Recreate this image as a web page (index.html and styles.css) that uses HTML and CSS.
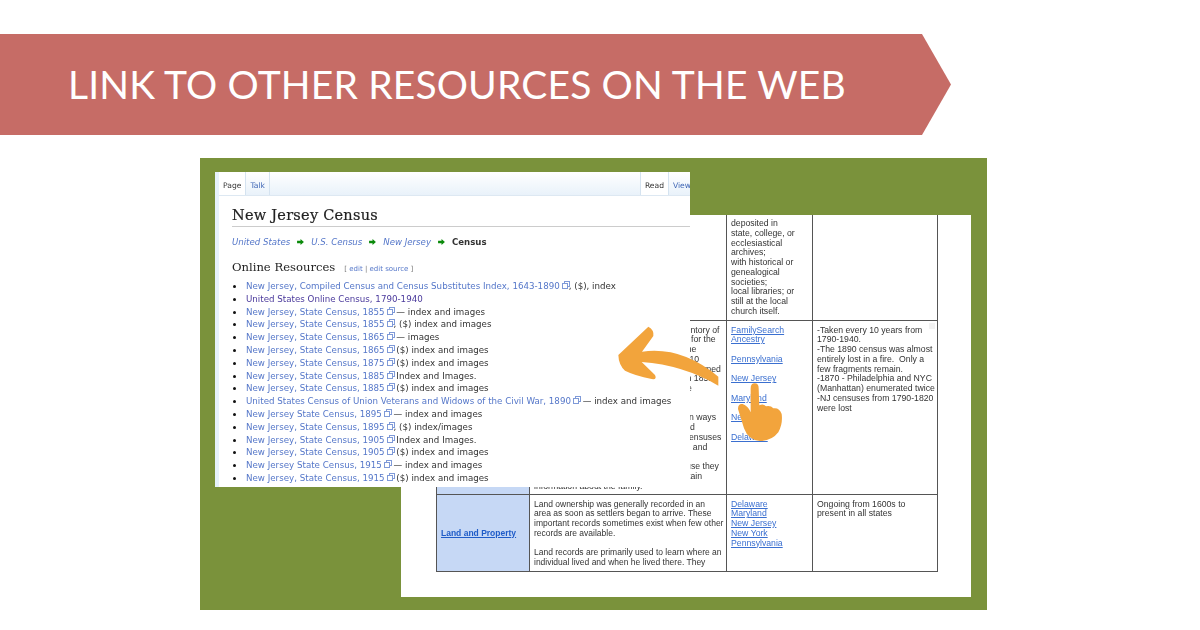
FILE: index.html
```html
<!DOCTYPE html>
<html>
<head>
    <title>Link to other resources on the web</title>
    <link rel="stylesheet" href="styles.css">
</head>
<body>
    <!-- Banner -->
    <div class="banner">
        <h1>LINK TO OTHER RESOURCES ON THE WEB</h1>
    </div>

    <div class="frame">
        <!-- Research table screenshot -->
        <div class="sheet">
            <table class="records">
                <colgroup>
                    <col class="col-name">
                    <col class="col-desc">
                    <col class="col-links">
                    <col class="col-notes">
                </colgroup>
                <tr class="row-top">
                    <td class="name"></td>
                    <td></td>
                    <td>deposited in<br>state, college, or<br>ecclesiastical<br>archives;<br>with historical or<br>genealogical<br>societies;<br>local libraries; or<br>still at the local<br>church itself.</td>
                    <td></td>
                </tr>
                <tr class="row-census">
                    <td class="name"></td>
                    <td class="lines">Census records are a governmental inventory of<br>the population of an area, and are made for the<br>purposes of counting and apportioning the<br>people, every ten years, starting from 1810<br>Only the heads of households were often named<br>and every person is recorded by name in 1855,<br>but these records vary from state to state<br><br><br>Censuses are one of the very best known ways<br>to find where people lived at that time and<br>show the family ties. Federal and state censuses<br>give full names, ages, birth places, work, and<br><br>Censuses are all especially useful because they<br>can often help the researcher to then obtain<br>information about the family.</td>
                    <td>
                        <a href="#">FamilySearch</a><br><a href="#">Ancestry</a><br><br>
                        <a href="#">Pennsylvania</a><br><br>
                        <a href="#">New Jersey</a><br><br>
                        <a href="#">Maryland</a><br><br>
                        <a href="#">New York</a><br><br>
                        <a href="#">Delaware</a>
                    </td>
                    <td class="notes">
                        <span class="cell-menu"></span>
                        -Taken every 10 years from 1790-1940.<br>-The 1890 census was almost entirely lost in a fire.&nbsp; Only a few fragments remain.<br>-1870 - Philadelphia and NYC (Manhattan) enumerated twice<br>-NJ censuses from 1790-1820 were lost
                    </td>
                </tr>
                <tr class="row-land">
                    <td class="name middle"><a href="#">Land and Property</a></td>
                    <td class="lines land-text">Land ownership was generally recorded in an<br>area as soon as settlers began to arrive. These<br>important records sometimes exist when few other<br>records are available.<br><br>Land records are primarily used to learn where an<br>individual lived and when he lived there. They</td>
                    <td><a href="#">Delaware</a><br><a href="#">Maryland</a><br><a href="#">New Jersey</a><br><a href="#">New York</a><br><a href="#">Pennsylvania</a></td>
                    <td>Ongoing from 1600s to<br>present in all states</td>
                </tr>
            </table>
        </div>

        <!-- Wiki page screenshot -->
        <div class="wiki">
            <div class="tabs">
                <span class="tab current">Page</span>
                <span class="tab">Talk</span>
                <span class="tabs-gap"></span>
                <span class="tab current">Read</span>
                <span class="tab tab-cut">View</span>
            </div>
            <div class="article">
                <h2 class="title">New Jersey Census</h2>
                <div class="crumbs">
                    <a href="#">United States</a>
                    <svg class="crumb-arrow" viewBox="0 0 8 7"><path d="M0 2h4V0l4 3.5L4 7V5H0z"/></svg>
                    <a href="#">U.S. Census</a>
                    <svg class="crumb-arrow" viewBox="0 0 8 7"><path d="M0 2h4V0l4 3.5L4 7V5H0z"/></svg>
                    <a href="#">New Jersey</a>
                    <svg class="crumb-arrow" viewBox="0 0 8 7"><path d="M0 2h4V0l4 3.5L4 7V5H0z"/></svg>
                    <b>Census</b>
                </div>
                <div class="section-head">
                    <h3>Online Resources</h3>
                    <span class="edit">[ <a href="#">edit</a> | <a href="#">edit source</a> ]</span>
                </div>
                <ul class="resources">
                    <li><a href="#" class="ext">New Jersey, Compiled Census and Census Substitutes Index, 1643-1890</a>, ($), index</li>
                    <li><a href="#" class="visited">United States Online Census, 1790-1940</a></li>
                    <li><a href="#" class="ext">New Jersey, State Census, 1855</a> — index and images</li>
                    <li><a href="#" class="ext">New Jersey, State Census, 1855</a>, ($) index and images</li>
                    <li><a href="#" class="ext">New Jersey, State Census, 1865</a> — images</li>
                    <li><a href="#" class="ext">New Jersey, State Census, 1865</a> ($) index and images</li>
                    <li><a href="#" class="ext">New Jersey, State Census, 1875</a> ($) index and images</li>
                    <li><a href="#" class="ext">New Jersey, State Census, 1885</a> Index and Images.</li>
                    <li><a href="#" class="ext">New Jersey, State Census, 1885</a> ($) index and images</li>
                    <li><a href="#" class="ext">United States Census of Union Veterans and Widows of the Civil War, 1890</a> — index and images</li>
                    <li><a href="#" class="ext">New Jersey State Census, 1895</a> — index and images</li>
                    <li><a href="#" class="ext">New Jersey, State Census, 1895</a>, ($) index/images</li>
                    <li><a href="#" class="ext">New Jersey, State Census, 1905</a> Index and Images.</li>
                    <li><a href="#" class="ext">New Jersey, State Census, 1905</a> ($) index and images</li>
                    <li><a href="#" class="ext">New Jersey State Census, 1915</a> — index and images</li>
                    <li><a href="#" class="ext">New Jersey, State Census, 1915</a> ($) index and images</li>
                </ul>
            </div>
        </div>

        <!-- Arrow and pointing hand -->
        <svg class="pointer" viewBox="0 0 600 390">
            <path d="M55 105 L145 20 Q163 30 160 48 L126 95 Q245 78 355 170 L355 197 Q250 135 125 126 L165 165 Q172 180 155 177 Q105 167 75 152 Q56 135 55 105Z"/>
            <path d="M452 205 Q452 190 464 190 Q476 190 476 205 L478 256 Q490 250 498 259 Q512 256 520 265 Q538 262 545 282 Q549 312 535 337 Q515 363 480 363 Q445 361 432 325 L414 267 Q414 250 428 252 Q444 258 452 276Z"/>
        </svg>
    </div>
</body>
</html>
```

FILE: styles.css
```css
body {
    margin: 0;
    background-color: #fff;
    overflow: hidden;
}

a {
    color: inherit;
}

/* Banner */
.banner {
    width: 951px;
    height: 101px;
    margin-top: 34px;
    padding: 0 0 2px 68px;
    box-sizing: border-box;
    display: flex;
    align-items: center;
    background-color: #c66c66;
    clip-path: polygon(0 0, 922px 0, 100% 50%, 922px 100%, 0 100%);
}

.banner h1 {
    margin: 0;
    font-family: "Lato", sans-serif;
    font-size: 39px;
    font-weight: 400;
    letter-spacing: 0.15px;
    color: #fff;
    white-space: nowrap;
}

/* Green frame */
.frame {
    position: relative;
    width: 787px;
    height: 452px;
    margin-top: 23px;
    margin-left: 200px;
    background-color: #7a923b;
}

/* Table screenshot */
.sheet {
    position: absolute;
    left: 201px;
    top: 57px;
    width: 570px;
    height: 382px;
    padding-left: 35px;
    box-sizing: border-box;
    background-color: #fff;
    overflow: hidden;
    filter: blur(0.45px);
}

.records {
    width: 501px;
    table-layout: fixed;
    border-collapse: collapse;
    font-family: "Liberation Sans", sans-serif;
    font-size: 8.7px;
    line-height: 9.75px;
    color: #333;
}

.col-name { width: 93px; }
.col-desc { width: 197px; }
.col-links { width: 86px; }
.col-notes { width: 125px; }

.records td {
    border: 1px solid #555;
    padding: 5px 0 0 4px;
    vertical-align: top;
}

.records a {
    color: #3a6fd0;
}

.row-top td {
    border-top: none;
    padding-top: 4px;
}

.row-top { height: 105px; }
.row-census { height: 174px; }
.row-land { height: 77px; }

.records .lines {
    white-space: nowrap;
    overflow: hidden;
}

.records .land-text {
    font-size: 8.5px;
}

.records .name {
    background-color: #c6d8f5;
}

.records .middle {
    vertical-align: middle;
    font-size: 8.5px;
    font-weight: bold;
    padding: 2px 0 0 4px;
}

.records .middle a {
    color: #1f5cc8;
}

.notes {
    position: relative;
}

.cell-menu {
    position: absolute;
    right: 2px;
    top: 2px;
    width: 6px;
    height: 6px;
    background-color: #f2f2f2;
}

/* Wiki screenshot */
.wiki {
    position: absolute;
    left: 15px;
    top: 14px;
    width: 475px;
    height: 315px;
    background-color: #fff;
    border-left: 4px solid #e6f2fb;
    box-sizing: border-box;
    overflow: hidden;
    filter: blur(0.35px);
}

.tabs {
    display: flex;
    height: 23px;
    background: linear-gradient(#fff, #e9f2fa);
    border-bottom: 1px solid #dde8f2;
    font-family: "DejaVu Sans", sans-serif;
    font-size: 7.6px;
}

.tab {
    flex-shrink: 0;
    padding: 9px 4px 0;
    color: #3f66b5;
    border-right: 1px solid #d5e3f0;
}

.tab.current {
    color: #333;
    background-color: #fff;
}

.tab-cut {
    margin-right: -6px;
}

.tabs-gap {
    flex: 1;
    border-right: 1px solid #d5e3f0;
}

.article {
    padding: 10px 0 0 13px;
    font-family: "DejaVu Sans", sans-serif;
    color: #333;
}

.article a {
    color: #5577c9;
    text-decoration: none;
}

.title {
    margin: 0;
    padding-bottom: 2px;
    height: 18px;
    font-family: "DejaVu Serif", serif;
    font-size: 14.5px;
    line-height: 18px;
    font-weight: 400;
    letter-spacing: 0.25px;
    color: #222;
    -webkit-text-stroke: 0.2px #222;
    border-bottom: 1px solid #ccc;
}

.crumbs {
    display: flex;
    align-items: center;
    gap: 6px;
    margin-top: 9px;
    font-size: 8.6px;
    line-height: 12px;
}

.crumbs a {
    font-style: italic;
}

.crumb-arrow {
    width: 7px;
    height: 6px;
    fill: #0a8a0a;
    margin: 0 1px;
}

.section-head {
    display: flex;
    align-items: baseline;
    gap: 9px;
    margin-top: 12px;
}

.section-head h3 {
    margin: 0;
    font-family: "DejaVu Serif", serif;
    font-size: 11.6px;
    font-weight: 400;
    line-height: 15px;
    color: #222;
}

.edit {
    font-size: 7px;
    color: #777;
}

.resources {
    margin: 5px 0 0;
    padding-left: 14px;
    font-size: 8.7px;
    line-height: 12.8px;
    white-space: nowrap;
}

.resources li::marker {
    color: #111;
    font-size: 11px;
}

.resources .visited {
    color: #4b3a9c;
}

/* Small external link mark, drawn with two boxes */
.ext::after {
    content: "";
    display: inline-block;
    width: 4px;
    height: 4px;
    margin: 0 1px 0 2px;
    border: 1px solid #7f9ad8;
    box-shadow: 2px -2px 0 -1px #fff, 2px -2px 0 0 #7f9ad8;
}

/* Arrow and hand, placed over both screenshots */
.pointer {
    position: absolute;
    left: 400px;
    top: 162px;
    width: 200px;
    height: 130px;
    fill: #f2a43c;
}
```
